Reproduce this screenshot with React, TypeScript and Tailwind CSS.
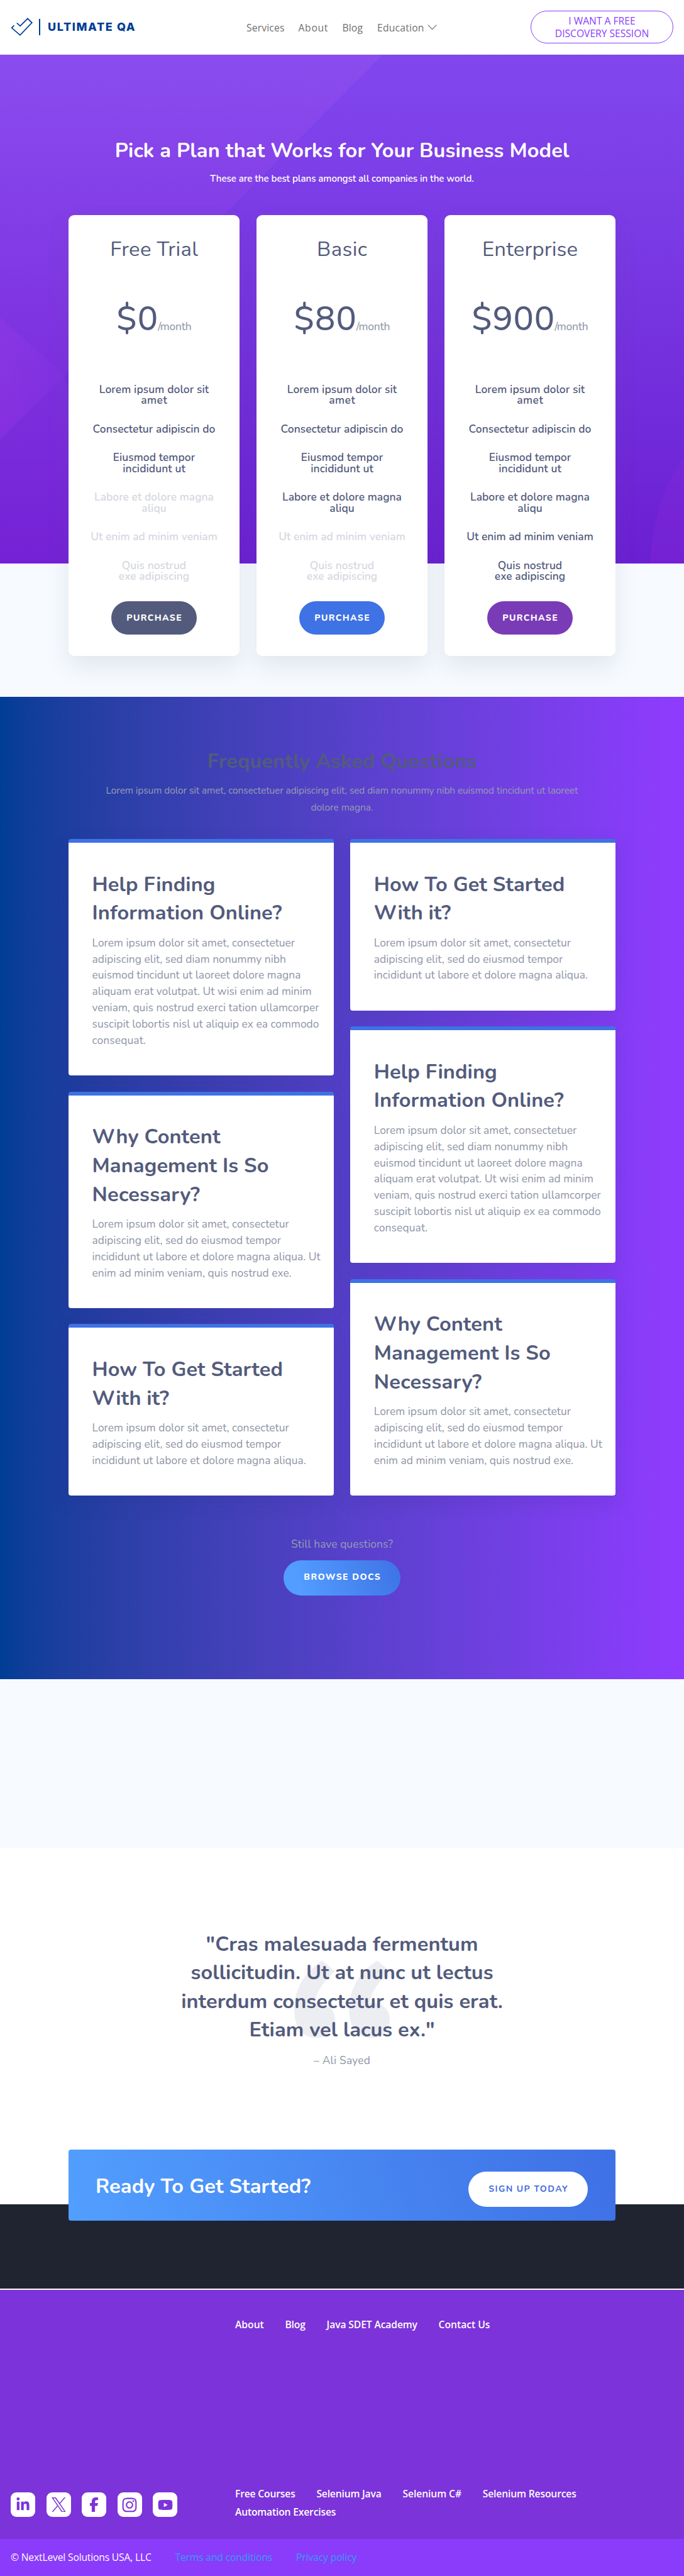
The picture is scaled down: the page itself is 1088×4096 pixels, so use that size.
import { useLayoutEffect, useRef, type ReactNode } from "react";
import { FaFacebookF, FaInstagram, FaLinkedinIn, FaYoutube } from "react-icons/fa6";

/** One line of text whose tracking is adjusted so that its ink spans `w` pixels. */
function Line({ w, children }: { w: number; children: string }) {
  const ref = useRef<HTMLSpanElement>(null);
  useLayoutEffect(() => {
    const el = ref.current;
    if (!el) return;
    el.style.letterSpacing = "0px";
    el.style.marginRight = "0px";
    const bearings = parseFloat(getComputedStyle(el).fontSize) * 0.09;
    const gap = (w + bearings - el.getBoundingClientRect().width) / Math.max(1, children.length - 1);
    el.style.letterSpacing = `${gap}px`;
    el.style.marginRight = `${-gap}px`;
  }, [w, children]);
  return (
    <span ref={ref} className="inline-block whitespace-nowrap">
      {children}
    </span>
  );
}

type TextLine = [string, number];

function Lines({ lines }: { lines: TextLine[] }) {
  return (
    <>
      {lines.map(([text, w]) => (
        <span key={text} className="block">
          <Line w={w}>{text}</Line>
        </span>
      ))}
    </>
  );
}

function Header() {
  return (
    <header className="flex h-[87px] items-center border-b border-[#f0eef6] bg-white pl-[17px] pr-[17px] font-['Open_Sans',sans-serif]">
      <div className="flex w-[375px] items-center text-[#003d96]">
        <svg className="h-[30px] w-[35px]" viewBox="0 0 40 35" fill="none" stroke="currentColor" strokeWidth="2">
          <path d="M6 14.5 1.5 19 17 32.500 39 9.500 31 1.800 17.200 15.500 11 10" />
        </svg>
        <div className="ml-[10px] h-[26px] w-[2px] bg-[#003d96]" />
        <div className="ml-[12px] font-['Inter',sans-serif] text-[18px] font-extrabold leading-[24px]">
          <Line w={137}>ULTIMATE QA</Line>
        </div>
      </div>
      <nav className="mt-[1px] flex flex-1 items-center text-[15.7px] font-medium leading-[20px] text-[#707070]">
        <span className="w-[82.500px]"><Line w={59}>Services</Line></span>
        <span className="w-[70px]"><Line w={45.500}>About</Line></span>
        <span className="w-[55.500px]"><Line w={31}>Blog</Line></span>
        <Line w={73}>Education</Line>
        <svg className="ml-[6px] h-[9px] w-[15px]" viewBox="0 0 15 9" fill="none" stroke="currentColor" strokeWidth="1.2">
          <path d="M.7.7 7.500 7.700 14.300.7" />
        </svg>
      </nav>
      <div className="flex h-[52px] w-[227px] flex-col items-center justify-center rounded-full border border-[#8b3dff] text-[15.7px] leading-[20px] text-[#8b3dff]">
        <Line w={105}>I WANT A FREE</Line>
        <Line w={148}>DISCOVERY SESSION</Line>
      </div>
    </header>
  );
}

const features: TextLine[][] = [
  [["Lorem ipsum dolor sit", 172.8], ["amet", 40]],
  [["Consectetur adipiscin do", 193.2]],
  [["Eiusmod tempor", 128.8], ["incididunt ut", 98]],
  [["Labore et dolore magna", 188.3], ["aliqu", 38]],
  [["Ut enim ad minim veniam", 200]],
  [["Quis nostrud", 100.7], ["exe adipiscing", 110.8]],
];

function PlanCard({ name, price, active, button }: { name: TextLine; price: TextLine; active: number; button: string }) {
  return (
    <div className="flex h-[700.700px] w-[272px] flex-col items-center rounded-[9px] bg-white text-center text-[#535b7c] shadow-[0_17px_35px_rgba(82,91,123,0.13)]">
      <h3 className="mt-[32px] text-[32.800px] leading-[46px]"><Line w={name[1]}>{name[0]}</Line></h3>
      <div className="mt-[52px] flex h-[70px] items-baseline justify-center text-[54px] font-medium leading-[70px]">
        <Line w={price[1]}>{price[0]}</Line>
        <span className="text-[17.400px] text-[#959bac]"><Line w={52}>/month</Line></span>
      </div>
      <ul className="mt-[69px] flex flex-col gap-[28.350px] text-[17.400px] font-semibold leading-[17.260px]">
        {features.map((lines, i) => (
          <li key={i} className={i < active ? "" : "text-[#d6d8df]"}><Lines lines={lines} /></li>
        ))}
      </ul>
      <button className={`mt-[31px] h-[52.500px] w-[136.700px] rounded-full text-[14px] font-extrabold leading-[20px] text-white ${button}`}>
        <Line w={86}>PURCHASE</Line>
      </button>
    </div>
  );
}

function Pricing() {
  return (
    <section className="relative h-[1021px] bg-[#f7fbff]">
      <svg className="absolute left-0 top-0 h-[809px] w-full" viewBox="0 0 1088 809" preserveAspectRatio="none">
        <defs>
          <linearGradient id="hero" x1="0" y1="0" x2="0" y2="1">
            <stop offset="0" stopColor="#8147ed" />
            <stop offset="0.35" stopColor="#7a3ae5" />
            <stop offset="1" stopColor="#6b1fd2" />
          </linearGradient>
          <linearGradient id="beam" x1="0" y1="0" x2="0" y2="1">
            <stop offset="0" stopColor="#a45cf0" stopOpacity="0.27" />
            <stop offset="0.45" stopColor="#a03ee8" stopOpacity="0.2" />
            <stop offset="1" stopColor="#9828e0" stopOpacity="0.22" />
          </linearGradient>
          <linearGradient id="beamFade" x1="0" y1="0" x2="1" y2="0">
            <stop offset="0" stopColor="#a03ae6" stopOpacity="0.3" />
            <stop offset="1" stopColor="#a03ae6" stopOpacity="0.1" />
          </linearGradient>
        </defs>
        <path fill="url(#hero)" d="M0 0H1088V809H0z" />
        <path fill="url(#beam)" d="M0 0H609L102 510 130 600 130 809H0z" />
        <path fill="url(#beamFade)" d="M0 418 103 510 0 612z" />
        <path fill="#8a27dc" fillOpacity="0.3" d="M1088 640Q1040 705 1034 809H1088z" />
      </svg>
      <div className="relative flex flex-col items-center pt-[129px] text-white">
        <h1 className="text-[32.500px] font-bold leading-[46px]"><Line w={719.600}>Pick a Plan that Works for Your Business Model</Line></h1>
        <p className="mt-[9px] text-[15.200px] font-semibold leading-[27px]"><Line w={418.500}>These are the best plans amongst all companies in the world.</Line></p>
        <div className="mt-[44px] flex gap-[27px]">
          <PlanCard name={["Free Trial", 136.800]} price={["$0", 61]} active={3} button="bg-[#535b7c]" />
          <PlanCard name={["Basic", 77]} price={["$80", 94.400]} active={4} button="bg-[#3e72e5]" />
          <PlanCard name={["Enterprise", 149.200]} price={["$900", 127]} active={6} button="bg-[#7a3bb7]" />
        </div>
      </div>
    </section>
  );
}

type Faq = { title: TextLine[]; body: TextLine[] };

const findingHelp: Faq = {
  title: [["Help Finding", 193], ["Information Online?", 299]],
  body: [
    ["Lorem ipsum dolor sit amet, consectetuer", 321],
    ["adipiscing elit, sed diam nonummy nibh", 306.7],
    ["euismod tincidunt ut laoreet dolore magna", 330.3],
    ["aliquam erat volutpat. Ut wisi enim ad minim", 347.6],
    ["veniam, quis nostrud exerci tation ullamcorper", 359.4],
    ["suscipit lobortis nisl ut aliquip ex ea commodo", 359.4],
    ["consequat.", 84],
  ],
};

const contentManagement: Faq = {
  title: [["Why Content", 201], ["Management Is So", 278], ["Necessary?", 168.6]],
  body: [
    ["Lorem ipsum dolor sit amet, consectetur", 311.6],
    ["adipiscing elit, sed do eiusmod tempor", 299],
    ["incididunt ut labore et dolore magna aliqua. Ut", 361.5],
    ["enim ad minim veniam, quis nostrud exe.", 315.7],
  ],
};

const gettingStarted: Faq = {
  title: [["How To Get Started", 300.5], ["With it?", 119.5]],
  body: [
    ["Lorem ipsum dolor sit amet, consectetur", 311.6],
    ["adipiscing elit, sed do eiusmod tempor", 299],
    ["incididunt ut labore et dolore magna aliqua.", 338.6],
  ],
};

function FaqCard({ title, body }: Faq) {
  return (
    <article className="rounded-[4px] border-t-[6px] border-[#3e72e5] bg-white pb-[42.300px] pl-[37.500px] pt-[43.500px] shadow-[0_10px_30px_rgba(40,40,120,0.15)]">
      <h3 className="text-[32.500px] font-bold leading-[45.700px] text-[#535b7c]"><Lines lines={title} /></h3>
      <div className="mt-[11.800px] text-[17.400px] leading-[25.860px] text-[#8f95a7]"><Lines lines={body} /></div>
    </article>
  );
}

function FaqSection() {
  return (
    <section className="flex h-[1562px] flex-col items-center bg-linear-to-r from-[#003d96] to-[#8f3bff] pt-[79px]">
      <h2 className="text-[32.500px] font-bold leading-[46px] text-[#535b7c]"><Line w={425.400}>Frequently Asked Questions</Line></h2>
      <div className="mt-[9.500px] text-center text-[15.500px] leading-[27px] text-[#959bb4]">
        <Lines lines={[["Lorem ipsum dolor sit amet, consectetuer adipiscing elit, sed diam nonummy nibh euismod tincidunt ut laoreet", 749.4], ["dolore magna.", 97.8]]} />
      </div>
      <div className="mt-[37.500px] grid w-[870px] grid-cols-2 items-start gap-x-[26.500px]">
        <div className="flex flex-col gap-[25.600px]">
          <FaqCard {...findingHelp} />
          <FaqCard {...contentManagement} />
          <FaqCard {...gettingStarted} />
        </div>
        <div className="flex flex-col gap-[25.600px]">
          <FaqCard {...gettingStarted} />
          <FaqCard {...findingHelp} />
          <FaqCard {...contentManagement} />
        </div>
      </div>
      <p className="mt-[64px] text-[17.400px] leading-[26px] text-[#959bb4]"><Line w={160.300}>Still have questions?</Line></p>
      <button className="mt-[13px] h-[56px] w-[186px] rounded-full bg-[linear-gradient(70deg,#529dff_15%,#3e72e5)] pb-[2px] text-[14px] font-extrabold text-white"><Line w={120}>BROWSE DOCS</Line></button>
    </section>
  );
}

function QuoteMark() {
  return <path d="M51 0 74 19C52 40 40 58 37 77 59 75 74 88 74 107 74 128 58 141 41 141 14 141 0 118 0 90 0 52 18 22 51 0z" />;
}

function Testimonial() {
  return (
    <section className="flex h-[567px] flex-col items-center bg-white pt-[130.500px] text-center">
      <div className="relative">
        <svg className="absolute left-1/2 top-[48px] h-[124px] w-[152px] -translate-x-1/2" viewBox="0 0 174 141" fill="#edeef2">
          <QuoteMark />
          <g transform="translate(100 0)"><QuoteMark /></g>
        </svg>
        <blockquote className="relative text-[32.500px] font-bold leading-[45.600px] text-[#535b7c]">
          <Lines lines={[['"Cras malesuada fermentum', 430], ["sollicitudin. Ut at nunc ut lectus", 478.2], ["interdum consectetur et quis erat.", 508.8], ['Etiam vel lacus ex."', 292.3]]} />
        </blockquote>
      </div>
      <p className="mt-[12px] text-[17.400px] leading-[26px] text-[#8f95a7]"><Line w={88.400}>– Ali Sayed</Line></p>
    </section>
  );
}

function CallToAction() {
  return (
    <section className="flex h-[136px] justify-center border-b-2 border-white bg-[#202431]">
      <div className="relative mt-[-87px] flex h-[113px] w-[870px] items-center justify-between rounded-[4px] bg-[linear-gradient(70deg,#529fff,#3e70e5)] pl-[43px] pr-[44px]">
        <h2 className="mt-[2px] text-[32.500px] font-bold leading-[46px] text-white"><Line w={339.300}>Ready To Get Started?</Line></h2>
        <button className="mt-[13px] h-[56px] w-[190px] rounded-full bg-white pb-[1px] text-[14px] font-bold text-[#4169e1]"><Line w={124.200}>SIGN UP TODAY</Line></button>
      </div>
    </section>
  );
}

function FooterRow({ items }: { items: TextLine[] }) {
  return (
    <nav className="flex gap-[33.600px]">
      {items.map(([text, w]) => <Line key={text} w={w}>{text}</Line>)}
    </nav>
  );
}

function XLogo() {
  return (
    <svg className="h-[23.500px] w-[23px]" viewBox="0 0 1200 1227" fill="currentColor">
      <path d="M714.163 519.284L1160.89 0H1055.03L667.137 450.887L357.328 0H0L468.492 681.821L0 1226.37H105.866L515.491 750.218L842.672 1226.37H1200L714.137 519.284H714.163ZM569.165 687.828L521.697 619.934L144.011 79.6944H306.615L611.412 515.685L658.88 583.579L1055.08 1150.3H892.476L569.165 687.854V687.828Z" />
    </svg>
  );
}

function SocialTile({ children }: { children: ReactNode }) {
  return <span className="flex size-[39px] items-center justify-center rounded-[9px] bg-white text-[#7c33d9]">{children}</span>;
}

function Footer() {
  return (
    <footer className="font-['Open_Sans',sans-serif] text-[15.700px] text-white">
      <div className="flex h-[396px] bg-[#7c33d9]">
        <div className="flex w-[374px] shrink-0 items-start gap-[17.600px] pl-[17px] pt-[322px]">
          <SocialTile><FaLinkedinIn size={23} /></SocialTile>
          <SocialTile><XLogo /></SocialTile>
          <SocialTile><FaFacebookF size={23} /></SocialTile>
          <SocialTile><FaInstagram size={26} /></SocialTile>
          <SocialTile><FaYoutube size={24} /></SocialTile>
        </div>
        <div className="flex flex-col pt-[41px] font-semibold leading-[29px]">
          <FooterRow items={[["About", 44.4], ["Blog", 31.2], ["Java SDET Academy", 143], ["Contact Us", 80.5]]} />
          <div className="mt-[240px]">
            <FooterRow items={[["Free Courses", 94.4], ["Selenium Java", 102], ["Selenium C#", 92.3], ["Selenium Resources", 147.8]]} />
            <FooterRow items={[["Automation Exercises", 159]]} />
          </div>
        </div>
      </div>
      <div className="flex h-[60px] items-center bg-[#8b3bfa] pl-[17px] text-[#2ea3f2]">
        <span className="w-[261.500px] text-white"><Line w={222.500}>© NextLevel Solutions USA, LLC</Line></span>
        <span className="w-[192.500px]"><Line w={153.400}>Terms and conditions</Line></span>
        <Line w={95}>Privacy policy</Line>
      </div>
    </footer>
  );
}

export default function App() {
  return (
    <main className="h-[4096px] w-[1088px] overflow-hidden bg-white font-['Nunito','Lato',sans-serif]">
      <Header />
      <Pricing />
      <FaqSection />
      <div className="h-[268px] bg-[#f7fbff]" />
      <Testimonial />
      <CallToAction />
      <Footer />
    </main>
  );
}
